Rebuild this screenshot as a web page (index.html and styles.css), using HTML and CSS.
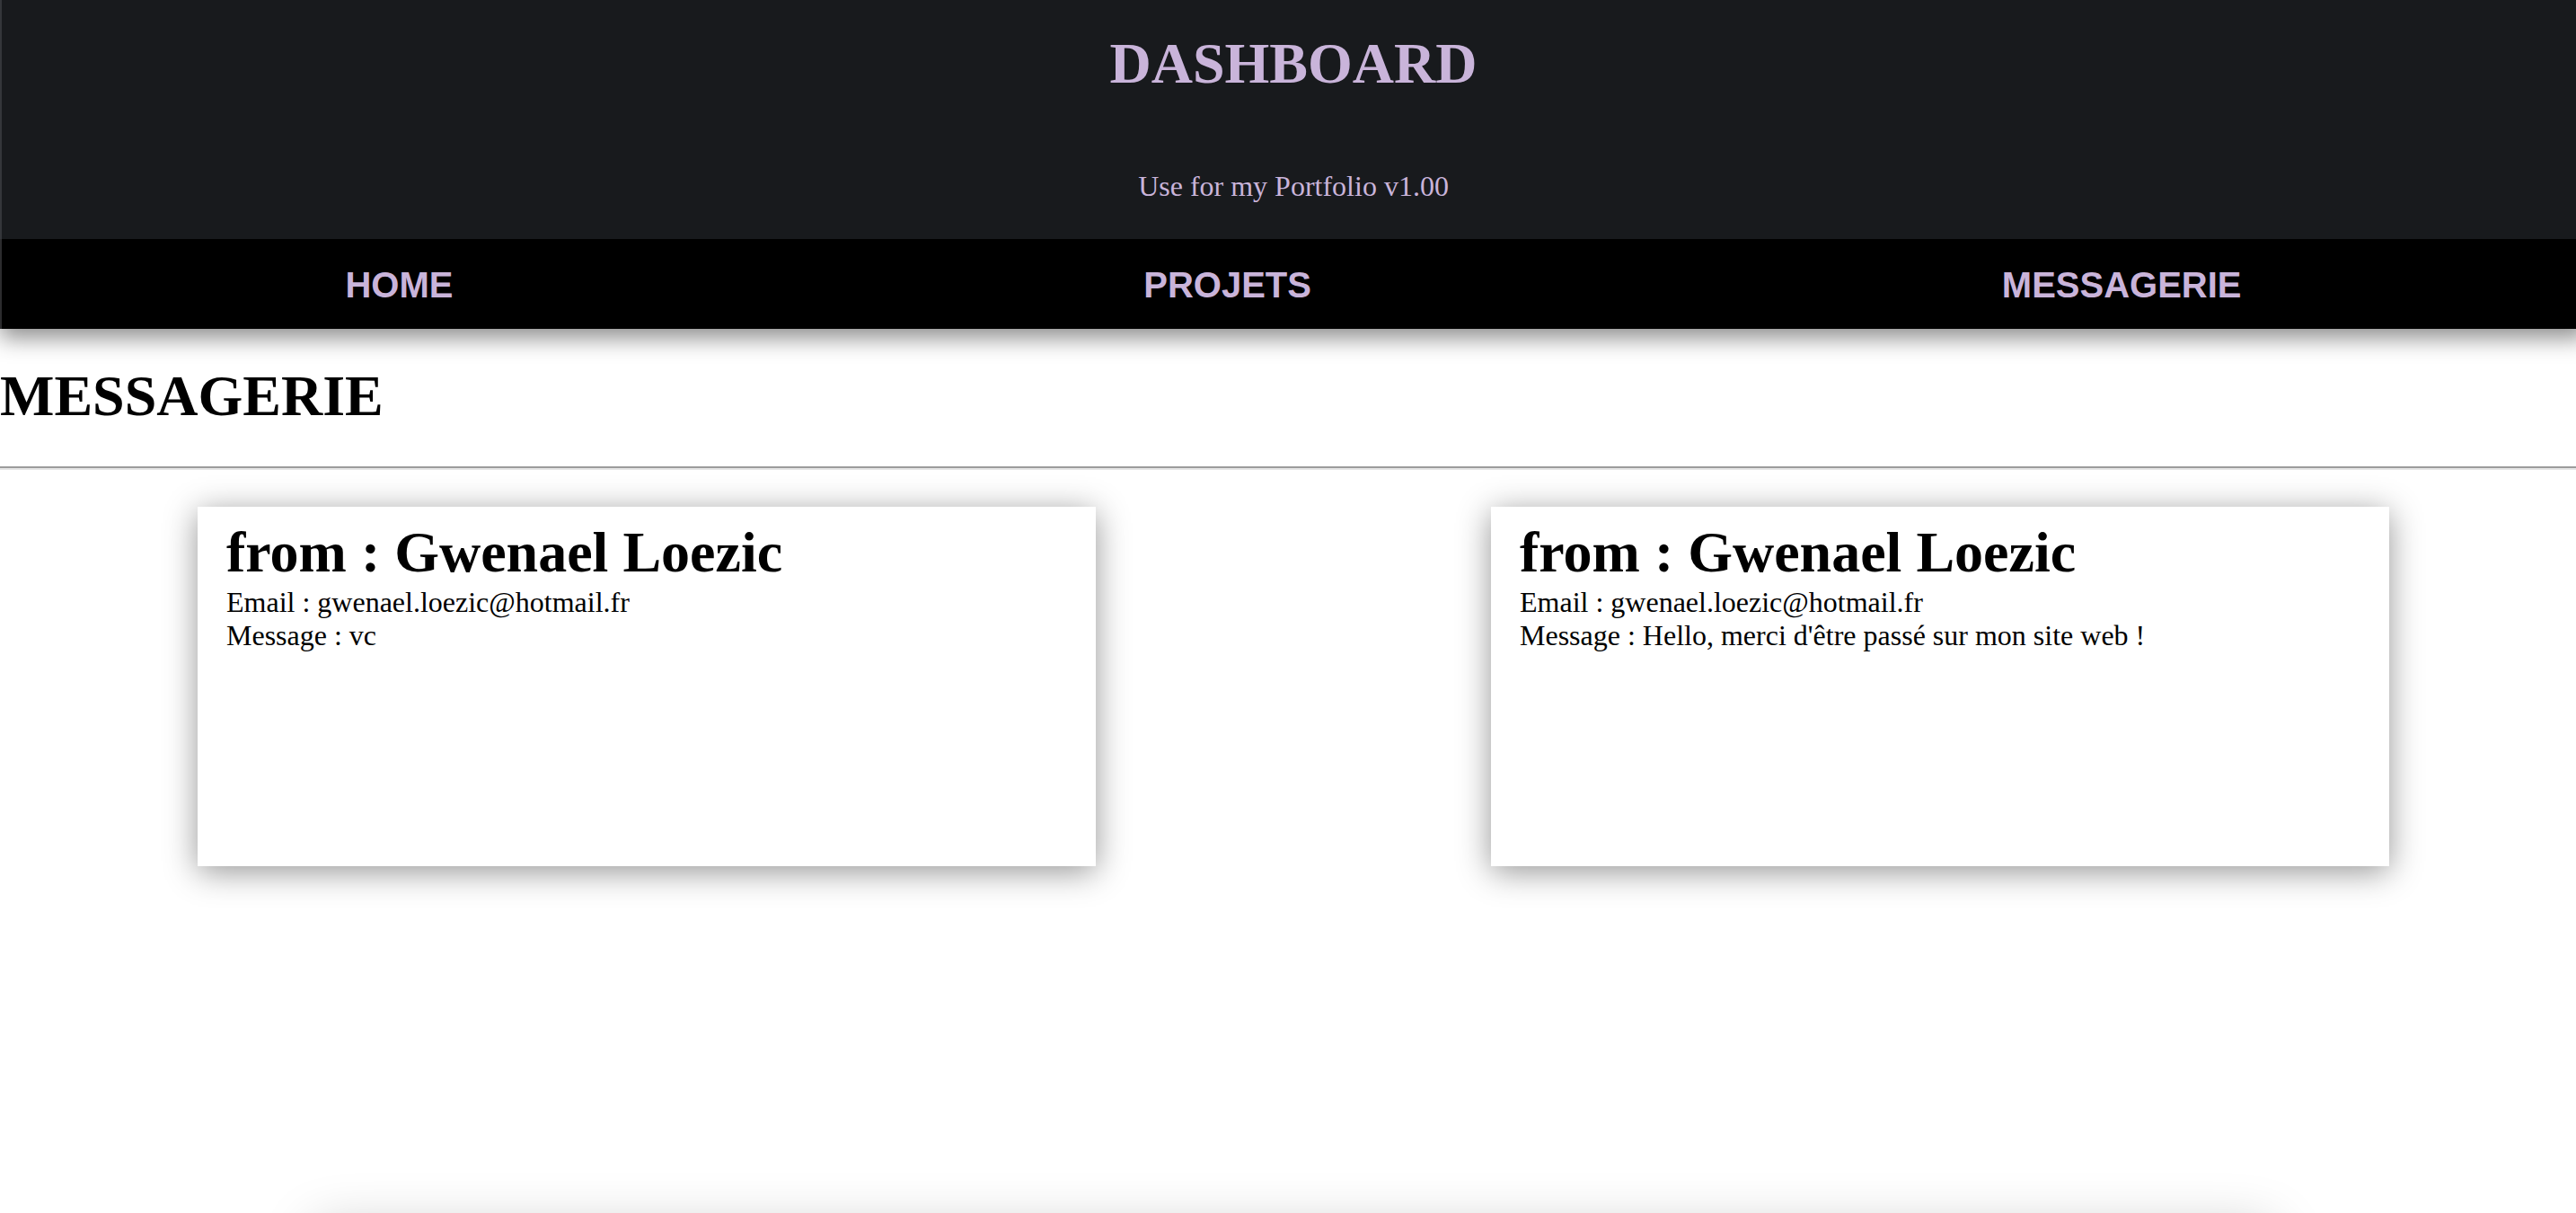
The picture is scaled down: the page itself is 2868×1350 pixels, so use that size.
FILE: index.html
```html
<!DOCTYPE html>
<html lang="fr">
<head>
<meta charset="utf-8">
<title>Dashboard - Messagerie</title>
<link rel="stylesheet" href="styles.css">
</head>
<body>
<header class="top">
  <div class="banner">
    <h1 class="banner-title">DASHBOARD</h1>
    <p class="banner-sub">Use for my Portfolio v1.00</p>
  </div>
  <nav class="menu">
    <a class="menu-link" href="#">HOME</a>
    <a class="menu-link" href="#">PROJETS</a>
    <a class="menu-link" href="#">MESSAGERIE</a>
  </nav>
</header>
<main class="content">
  <h1 class="page-title">MESSAGERIE</h1>
  <hr class="sep">
  <section class="messages">
    <article class="card">
      <h2 class="card-from">from : Gwenael Loezic</h2>
      <p class="card-line">Email : gwenael.loezic@hotmail.fr</p>
      <p class="card-line">Message : vc</p>
    </article>
    <article class="card">
      <h2 class="card-from">from : Gwenael Loezic</h2>
      <p class="card-line">Email : gwenael.loezic@hotmail.fr</p>
      <p class="card-line">Message : Hello, merci d'être passé sur mon site web !</p>
    </article>
  </section>
  <div class="panel"></div>
</main>
</body>
</html>
```

FILE: styles.css
```css
html {
  overflow: hidden;
  background: #ffffff;
}

body {
  margin: 0;
  width: 2880px;
  font-family: "Liberation Serif", "Times New Roman", serif;
  color: #000;
  background: #ffffff;
}

.top {
  position: relative;
  z-index: 2;
  box-shadow: 0 10px 24px rgba(0, 0, 0, 0.45);
}

.banner {
  height: 266px;
  box-sizing: border-box;
  padding-top: 34px;
  background: #181a1d;
  box-shadow: inset 2px 0 0 #34363a;
  text-align: center;
  color: #c9b4da;
}

.banner-title {
  margin: 0;
  font-size: 64px;
  line-height: 74px;
  font-weight: bold;
}

.banner-sub {
  margin: 81px 0 0;
  font-size: 32px;
  line-height: 37px;
}

.menu {
  height: 100px;
  box-sizing: border-box;
  padding-top: 3px;
  display: flex;
  justify-content: space-around;
  align-items: center;
  background: #000;
  box-shadow: inset 2px 0 0 #2c2c2e;
}

.menu-link {
  font-family: "Liberation Sans", Arial, Helvetica, sans-serif;
  font-weight: bold;
  font-size: 40px;
  color: #c9b4da;
  text-decoration: none;
}

.page-title {
  margin: 38px 0 41px;
  font-size: 64px;
  line-height: 74px;
  font-weight: bold;
}

.sep {
  margin: 0;
  height: 0;
  border: none;
  border-top: 2px solid #9c9c9c;
  border-bottom: 2px solid #e6e6e6;
}

.messages {
  display: flex;
  justify-content: space-around;
  padding-top: 41px;
}

.card {
  width: 1000px;
  height: 400px;
  box-sizing: border-box;
  padding: 14px 32px;
  background: #fff;
  box-shadow: 0 6px 34px rgba(0, 0, 0, 0.42);
}

.card-from {
  margin: 0;
  font-size: 64px;
  line-height: normal;
  font-weight: bold;
}

.card-line {
  margin: 0;
  font-size: 32px;
  line-height: normal;
}

.panel {
  width: 2180px;
  height: 100px;
  margin: 402px auto 0;
  background: #fff;
  box-shadow: 0 0 60px rgba(0, 0, 0, 0.22);
}
```
